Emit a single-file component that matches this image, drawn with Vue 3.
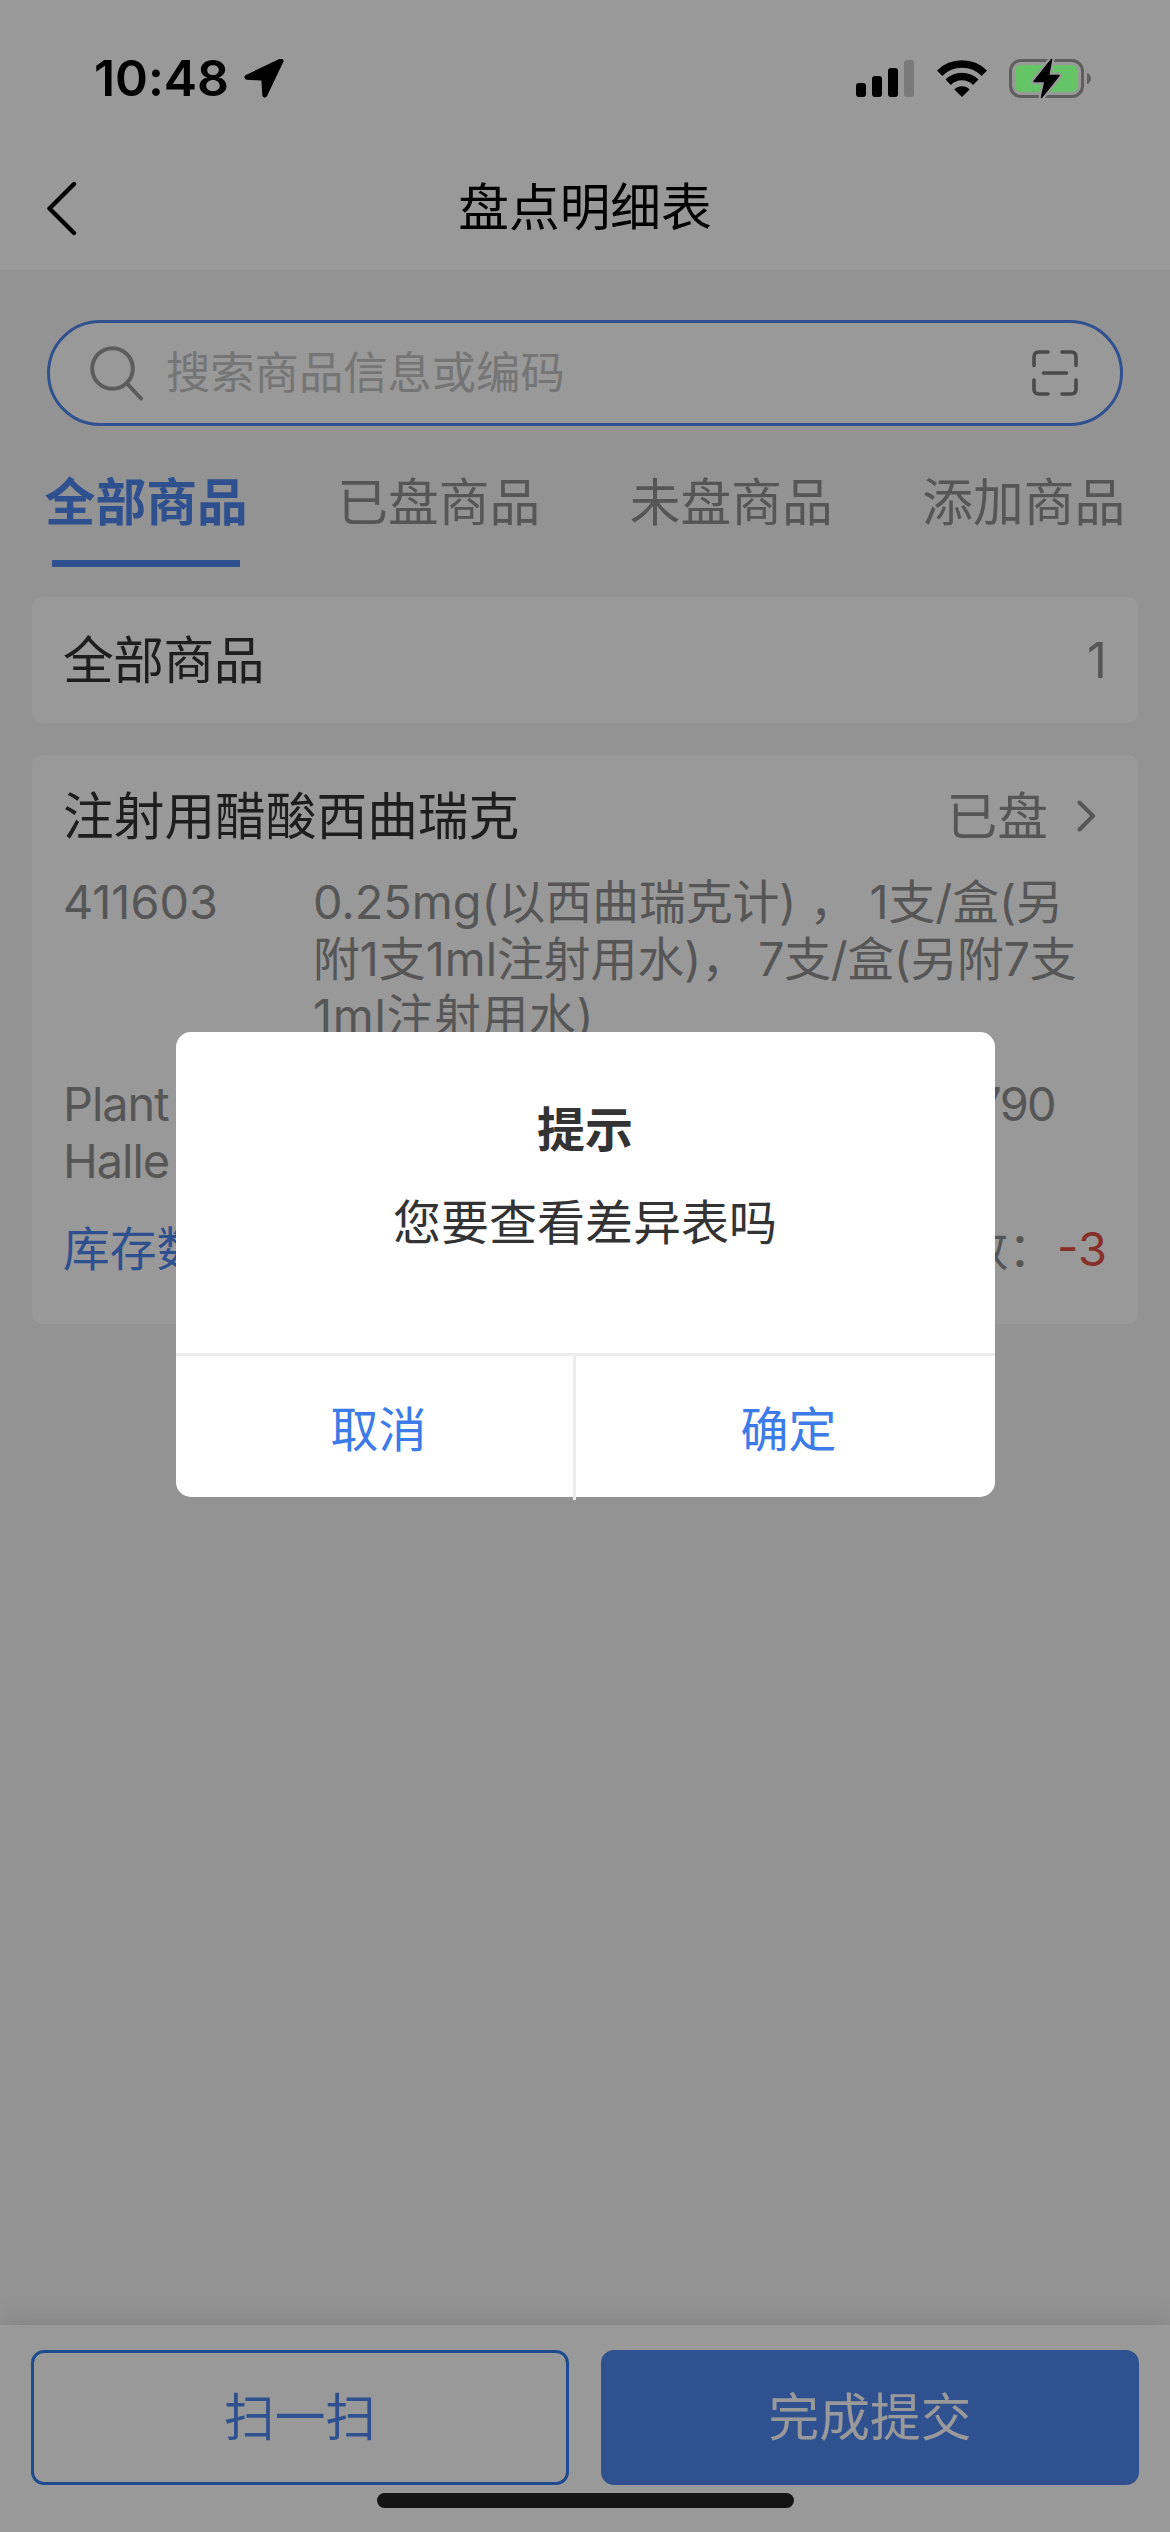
<template>
  <div class="page">
    <!-- 状态栏 -->
    <div class="status-bar">
      <div class="status-left">
        <span class="time">10:48</span>
        <svg class="location" width="40" height="39" viewBox="0 0 40 39">
          <path
            d="M37 2 L3 18.2 L19.8 19.2 L20.8 36 Z"
            fill="#000"
            stroke="#000"
            stroke-width="5"
            stroke-linejoin="round"
          />
        </svg>
      </div>
      <div class="status-right">
        <svg width="58" height="37" viewBox="0 0 58 37">
          <rect x="0" y="23" width="10" height="14" rx="3" />
          <rect x="16" y="16" width="10" height="21" rx="3" />
          <rect x="32" y="8" width="10" height="29" rx="3" />
          <rect x="48" y="0" width="10" height="37" rx="3" fill="#7a7a7a" />
        </svg>
        <svg class="wifi" width="50" height="37" viewBox="0 0 50 37">
          <g fill="none" stroke="#000" stroke-width="7.6">
            <path d="M2.6 13.2 A32 32 0 0 1 47.4 13.2" />
            <path d="M11.2 22.2 A19.6 19.6 0 0 1 38.8 22.2" />
          </g>
          <path d="M25 37 L17.4 29.4 A10.8 10.8 0 0 1 32.6 29.4 Z" />
        </svg>
        <svg class="battery" width="83" height="41" viewBox="0 0 83 41">
          <rect
            x="1.5"
            y="2.5"
            width="72"
            height="36"
            rx="10.5"
            fill="none"
            stroke="#5e5e5e"
            stroke-width="3"
          />
          <path d="M78 15 C83.3 16.5 83.3 24.5 78 26 Z" fill="#5e5e5e" />
          <rect x="6" y="7" width="63" height="27" rx="6" fill="#65c466" />
          <path
            d="M42.5 1.5 L25 23.5 H36 L32.5 39.5 L50 17.5 H39.5 Z"
            stroke="#999"
            stroke-width="6"
            stroke-linejoin="round"
          />
          <path
            d="M42.5 1.5 L25 23.5 H36 L32.5 39.5 L50 17.5 H39.5 Z"
            stroke="#000"
            stroke-width="1.5"
            stroke-linejoin="round"
          />
        </svg>
      </div>
    </div>

    <!-- 导航栏 -->
    <div class="nav-bar">
      <svg class="back" width="34" height="56" viewBox="0 0 34 56">
        <path
          d="M29 4 L4.5 28.5 L29 53"
          fill="none"
          stroke="#000"
          stroke-width="4.4"
          stroke-linecap="round"
          stroke-linejoin="round"
        />
      </svg>
      <span class="nav-title">盘点明细表</span>
    </div>

    <!-- 搜索框 -->
    <div class="search">
      <svg width="54" height="55" viewBox="0 0 54 55">
        <g fill="none" stroke="#9a9a9a" stroke-width="4" stroke-linecap="round">
          <circle cx="22.5" cy="22.5" r="20.3" />
          <path d="M37.5 38 L51 52.5" />
        </g>
      </svg>
      <span class="placeholder">搜索商品信息或编码</span>
      <svg width="46" height="46" viewBox="0 0 46 46">
        <path
          d="M2 15.5 V7 Q2 2 7 2 H16 M30 2 H39 Q44 2 44 7 V15.5 M44 30 V39 Q44 44 39 44 H30 M16 44 H7 Q2 44 2 39 V30 M11.5 23 H34.5"
          fill="none"
          stroke="#7c7c7c"
          stroke-width="3.6"
          stroke-linecap="round"
        />
      </svg>
    </div>

    <!-- 标签页 -->
    <div class="tabs">
      <div
        v-for="(tab, index) in tabs"
        :key="tab"
        class="tab"
        :class="{ active: index === activeTab }"
        @click="activeTab = index"
      >
        {{ tab }}
      </div>
    </div>

    <div class="card total">
      <span class="total-name">{{ tabs[activeTab] }}</span>
      <span class="count">1</span>
    </div>

    <div class="card goods">
      <div class="goods-head">
        <span class="goods-name">{{ goods.name }}</span>
        <span class="goods-state">{{ goods.state }}</span>
        <svg width="19" height="34" viewBox="0 0 19 34">
          <path
            d="M2.5 4.5 L16 18 L2.5 31.5"
            fill="none"
            stroke="#8f8f8f"
            stroke-width="4"
            stroke-linecap="round"
            stroke-linejoin="round"
          />
        </svg>
      </div>
      <div class="goods-row spec-row">
        <span class="code">{{ goods.code }}</span>
        <div class="spec">
          <div v-for="(line, i) in goods.spec" :key="i" :class="'spec-' + i">
            <span v-for="part in line" :key="part" class="part">{{ part }}</span>
          </div>
        </div>
      </div>
      <div class="goods-row maker-row">
        <span class="maker">{{ goods.maker }}</span>
        <span class="batch">{{ goods.batch }}</span>
      </div>
      <div class="goods-row stock-row">
        <span class="stock">库存数</span>
        <span class="diff-label">差异数：</span>
        <span class="diff">{{ goods.diff }}</span>
      </div>
    </div>

    <!-- 底部按钮 -->
    <div class="footer">
      <div class="btn plain">扫一扫</div>
      <div class="btn primary">完成提交</div>
    </div>

    <!-- 弹窗 -->
    <div v-if="showDialog" class="mask">
      <div class="dialog">
        <div class="dialog-title">提示</div>
        <div class="dialog-text">您要查看差异表吗</div>
        <div class="dialog-actions">
          <div class="action cancel" @click="showDialog = false">取消</div>
          <div class="action" @click="showDialog = false">确定</div>
        </div>
      </div>
    </div>

    <div class="home-indicator"></div>
  </div>
</template>

<script setup>
import { ref } from "vue";

const tabs = ["全部商品", "已盘商品", "未盘商品", "添加商品"];
const activeTab = ref(0);
const showDialog = ref(true);

const goods = ref({
  name: "注射用醋酸西曲瑞克",
  state: "已盘",
  code: "411603",
  spec: [
    ["0.25mg(以西曲瑞克计) ， 1支/盒(另"],
    ["附1支1ml注射用水)，", "7支/盒(另附7支"],
    ["1ml注射用水)"],
  ],
  maker: "Plant Halle",
  batch: "790",
  diff: "-3",
});
</script>

<style>
body {
  margin: 0;
}
</style>

<style scoped>
.page {
  position: relative;
  display: flex;
  flex-direction: column;
  box-sizing: border-box;
  width: 1170px;
  height: 2532px;
  overflow: hidden;
  background: #f5f5f5;
  color: #333;
  font-family: Inter, "Noto Sans CJK SC", sans-serif;
  font-size: 50.7px;
  white-space: nowrap;
}

svg {
  display: block;
  flex: none;
}

/* 状态栏在遮罩之上 */
.status-bar {
  position: relative;
  z-index: 3;
  display: flex;
  justify-content: space-between;
  box-sizing: border-box;
  height: 140px;
  padding: 0 78px 0 94px;
}

.status-left,
.status-right {
  display: flex;
  align-items: center;
  height: 156px;
  color: #000;
}

.time {
  font-size: 50px;
  font-weight: 600;
  letter-spacing: -0.1px;
}

.location {
  margin-left: 15px;
}

.wifi {
  margin-left: 23px;
}

.battery {
  margin-left: 22px;
}

.nav-bar {
  display: flex;
  align-items: center;
  box-sizing: border-box;
  height: 270px;
  margin-top: -140px;
  padding: 143px 0 5px 45px;
  background: #fff;
  color: #000;
}

.back {
  margin-top: 7px;
}

.nav-title {
  flex: 1;
  padding-right: 79px;
  text-align: center;
}

.search {
  display: flex;
  align-items: center;
  box-sizing: border-box;
  height: 106px;
  margin: 50px 47px 0;
  padding: 0 42px 0 40px;
  border: 3px solid #5088ee;
  border-radius: 53px;
  background: #fff;
}

.placeholder {
  flex: 1;
  padding-left: 22px;
  color: #c4c4c4;
  font-size: 44.3px;
  line-height: 60px;
}

.tabs {
  display: flex;
  height: 141px;
  margin-bottom: 30px;
}

.tab {
  flex: 1;
  color: #8f8f8f;
  line-height: 154px;
  text-align: center;
}

.tab.active {
  color: #4f86ee;
  font-weight: 700;
}

.tab.active::after {
  content: "";
  display: block;
  width: 188px;
  height: 7px;
  margin: -20px auto 0;
  background: #5088ee;
}

.card {
  box-sizing: border-box;
  margin: 0 32px;
  padding: 0 31px;
  border-radius: 10px;
  background: #fff;
}

.total {
  display: flex;
  align-items: center;
  justify-content: space-between;
  height: 126px;
}

.total-name {
  padding-bottom: 6px;
  letter-spacing: -0.4px;
}

.count {
  color: #8f8f8f;
  font-size: 49px;
}

.goods {
  height: 569px;
  margin-top: 32px;
  color: #8f8f8f;
  font-size: 46.8px;
}

.goods-head {
  display: flex;
  align-items: center;
  height: 119px;
  padding-right: 11px;
  font-size: 50.7px;
}

.goods-name {
  flex: 1;
  padding-bottom: 4px;
  color: #333;
}

.goods-state {
  margin-right: 29px;
  padding-bottom: 4px;
}

.goods-row {
  display: flex;
  line-height: 57px;
}

.spec-row {
  height: 202px;
}

.code {
  width: 250px;
}

.spec-1 .part:last-child {
  margin-left: 10px;
  letter-spacing: -0.3px;
}

.spec-2 {
  letter-spacing: 0.7px;
}

.maker-row {
  justify-content: space-between;
  height: 145px;
}

.maker {
  width: 180px;
  letter-spacing: -1px;
  white-space: normal;
}

.batch {
  margin-right: 52px;
  letter-spacing: -1.6px;
}

.stock {
  flex: 1;
  color: #4f86ee;
}

.diff-label {
  margin-right: 2px;
}

.diff {
  color: #e14f45;
}

.footer {
  display: flex;
  gap: 32px;
  box-sizing: border-box;
  height: 207px;
  margin-top: auto;
  padding: 25px 31px 47px;
  background: #fff;
  box-shadow: 0 0 30px rgba(0, 0, 0, 0.14);
}

.btn {
  flex: 1;
  box-sizing: border-box;
  border: 3px solid #327dee;
  border-radius: 13px;
  color: #5088ee;
  line-height: 130px;
  text-align: center;
}

.btn.primary {
  border-color: #5088ee;
  background: #5088ee;
  color: #fff;
}

.mask {
  position: absolute;
  inset: 0;
  z-index: 2;
  display: flex;
  align-items: flex-start;
  justify-content: center;
  background: rgba(0, 0, 0, 0.4);
}

.dialog {
  box-sizing: border-box;
  width: 819px;
  height: 465px;
  margin-top: 1032px;
  padding-top: 63px;
  border-radius: 15px;
  background: #fff;
  font-size: 48px;
  text-align: center;
}

.dialog-title {
  height: 93px;
  font-weight: 700;
  line-height: 70px;
}

.dialog-text {
  height: 165px;
  line-height: 70px;
}

.dialog-actions {
  display: flex;
  height: 144px;
  border-top: 3px solid #ececec;
}

.action {
  flex: 1;
  padding-left: 7px;
  color: #3c7be8;
  line-height: 147px;
}

.action.cancel {
  flex: none;
  width: 388px;
  padding-left: 9px;
  border-right: 3px solid #ececec;
}

.home-indicator {
  position: absolute;
  bottom: 24px;
  left: 377px;
  z-index: 3;
  width: 417px;
  height: 15px;
  border-radius: 8px;
  background: #141414;
}
</style>
